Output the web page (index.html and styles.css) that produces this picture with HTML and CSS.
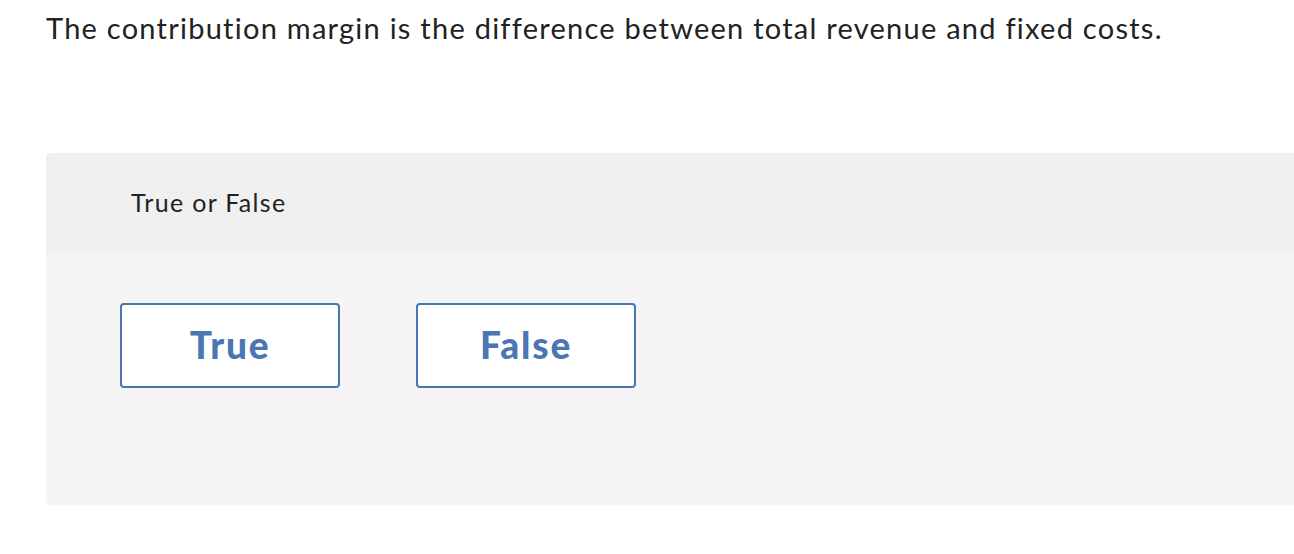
FILE: index.html
```html
<!DOCTYPE html>
<html>
<head>
<meta charset="utf-8">
<link rel="stylesheet" href="styles.css">
</head>
<body>
<div class="page">
  <p class="question">The contribution margin is the difference between total revenue and fixed costs.</p>
  <div class="panel">
    <div class="panel-head">True or False</div>
    <div class="panel-body">
      <button class="choice">True</button>
      <button class="choice">False</button>
    </div>
  </div>
</div>
</body>
</html>
```
FILE: styles.css
```css
html, body {
  margin: 0;
  padding: 0;
  background: #ffffff;
  overflow: hidden;
}
.page {
  padding: 0 0 0 46px;
  font-family: Lato, "Liberation Sans", sans-serif;
  font-variant-ligatures: none;
  color: #222222;
}
.question {
  margin: 0;
  padding-top: 10px;
  font-size: 29px;
  line-height: 36px;
  letter-spacing: 1.25px;
  white-space: nowrap;
}
.panel {
  margin-top: 107px;
  width: 1300px;
  border-radius: 4px 0 0 4px;
  overflow: hidden;
}
.panel-head {
  background: #f0f0f0;
  height: 100px;
  padding-left: 85px;
  padding-bottom: 2px;
  box-sizing: border-box;
  display: flex;
  align-items: center;
  font-size: 25px;
  letter-spacing: 1.3px;
}
.panel-body {
  background: #f5f5f5;
  height: 252px;
  box-sizing: border-box;
  padding: 50px 0 0 74px;
  display: flex;
  align-items: flex-start;
  gap: 76px;
}
.choice {
  width: 220px;
  height: 85px;
  box-sizing: border-box;
  background: #ffffff;
  border: 2px solid #4a76b4;
  border-radius: 4px;
  color: #4a76b4;
  font-family: Lato, "Liberation Sans", sans-serif;
  font-weight: 900;
  font-size: 37px;
  letter-spacing: 1.8px;
  padding: 0 0 2px 0;
  cursor: pointer;
}
```
